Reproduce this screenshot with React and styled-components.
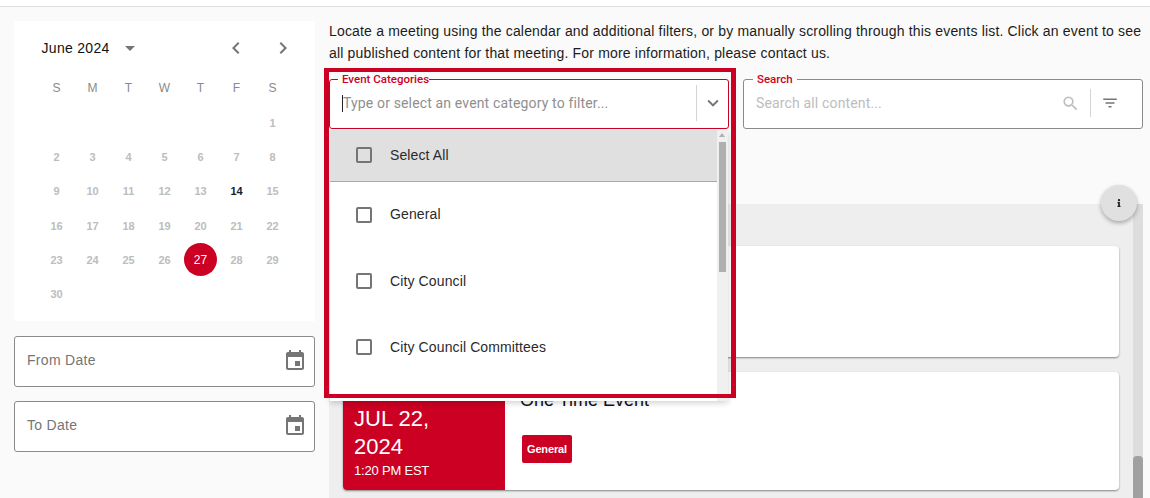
import React from "react";
import styled, { createGlobalStyle } from "styled-components";
import {
  MdArrowDropDown,
  MdChevronLeft,
  MdChevronRight,
  MdEvent,
  MdExpandMore,
  MdFilterList,
  MdSearch,
} from "react-icons/md";
import { FaInfo } from "react-icons/fa";

const RED = "#cc0022";

const GlobalStyle = createGlobalStyle`
  html, body {
    margin: 0;
    height: 100%;
    overflow: hidden;
    background: #fafafa;
    font-family: "Liberation Sans", Arial, sans-serif;
  }
  * { box-sizing: border-box; }
`;

const Page = styled.div`
  width: 1150px;
  height: 498px;
  overflow: hidden;
`;

const TopBar = styled.div`
  height: 7px;
  background: #fff;
  border-bottom: 1px solid #e0e0e0;
`;

const Body = styled.div`
  display: flex;
  gap: 14px;
  padding: 13px 7px 0 14px;
`;

const Sidebar = styled.aside`
  width: 301px;
  flex: none;
  display: flex;
  flex-direction: column;
  padding-top: 1px;
`;

const Calendar = styled.div`
  height: 300px;
  background: #fff;
  padding: 15px 0 0 24.5px;
  margin-bottom: 15px;
`;

const CalendarHead = styled.div`
  display: flex;
  align-items: center;
  height: 24px;
  padding-left: 3px;
  margin-bottom: 11px;
`;

const MonthLabel = styled.span`
  font-size: 14px;
  letter-spacing: 0.3px;
  color: #111;
`;

const MonthCaret = styled(MdArrowDropDown)`
  font-size: 24px;
  color: #757575;
  margin-left: 8px;
`;

const NavGroup = styled.div`
  margin-left: 82px;
  display: flex;
  gap: 23px;
  color: #757575;
  font-size: 24px;
`;

const WeekRow = styled.div`
  display: grid;
  grid-template-columns: repeat(7, 36px);
  height: 34px;
  align-items: center;
  margin-bottom: 1px;
`;

const WeekDay = styled.span`
  text-align: center;
  font-size: 12px;
  color: #8a8a8a;
`;

const DayGrid = styled.div`
  display: grid;
  grid-template-columns: repeat(7, 36px);
  grid-auto-rows: 34.2px;
  align-items: center;
  justify-items: center;
`;

const Day = styled.span`
  grid-column-start: ${(p) => p.$start || "auto"};
  width: 33px;
  height: 33px;
  border-radius: 50%;
  display: flex;
  align-items: center;
  justify-content: center;
  font-size: ${(p) => (p.$selected ? 12 : 11)}px;
  font-weight: ${(p) => (p.$selected ? 400 : 700)};
  color: ${(p) => (p.$selected ? "#fff" : p.$today ? "#1a1a2e" : "#bdbdbd")};
  background: ${(p) => (p.$selected ? RED : "transparent")};
`;

const DateField = styled.div`
  height: 51px;
  background: #fff;
  border: 1px solid #8a8a8a;
  border-radius: 3px;
  display: flex;
  align-items: flex-start;
  justify-content: space-between;
  padding: 12px 7px 0 12px;
  margin-bottom: 14px;
  font-size: 14px;
  letter-spacing: 0.3px;
  color: #757575;
  line-height: 22px;
`;

const DateIcon = styled(MdEvent)`
  font-size: 24px;
  color: #757575;
`;

const Main = styled.main`
  flex: 1;
  min-width: 0;
`;

const Intro = styled.p`
  margin: 0 0 9px;
  width: 814px;
  font-size: 14px;
  line-height: 22px;
  letter-spacing: 0.175px;
  color: #1c1c1c;
`;

const FilterRow = styled.div`
  position: relative;
  display: flex;
  gap: 14px;
  height: 131px;
`;

const Field = styled.fieldset`
  position: relative;
  margin: 0;
  padding: 0 0 0 12px;
  height: 56px;
  width: ${(p) => p.$width}px;
  flex: none;
  background: #fff;
  border: 1px solid ${(p) => (p.$active ? RED : "#8a8a8a")};
  border-radius: 3px;
  display: flex;
  align-items: flex-start;
`;

const Legend = styled.legend`
  padding: 0 ${(p) => p.$trail}px 0 4px;
  margin-left: ${(p) => p.$offset}px;
  font-family: Roboto, sans-serif;
  font-size: 11.5px;
  line-height: 12px;
  font-weight: 500;
  color: ${RED};
`;

const Inner = styled.div`
  display: flex;
  align-items: center;
  width: 100%;
  height: 36px;
  font-family: Roboto, sans-serif;
  font-size: 14px;
`;

const Caret = styled.span`
  width: 1px;
  height: 17px;
  background: #222;
`;

const Placeholder = styled.span`
  flex: 1;
  letter-spacing: 0.15px;
  color: ${(p) => p.$color};
`;

const Divider = styled.span`
  width: 1px;
  height: ${(p) => p.$height}px;
  background: #d4d4d4;
  margin: 0 ${(p) => p.$gap}px;
`;

const ChevronIcon = styled(MdExpandMore)`
  font-size: 22px;
  color: #757575;
  margin: 0 4px 0 1px;
`;

const SearchIcon = styled(MdSearch)`
  font-size: 19px;
  color: #bdbdbd;
`;

const FilterIcon = styled(MdFilterList)`
  font-size: 18px;
  color: #757575;
  margin-right: 23px;
`;

const Dropdown = styled.div`
  position: absolute;
  z-index: 10;
  top: 45px;
  left: 0;
  width: 398px;
  height: 271px;
  background: #fff;
  display: flex;
  box-shadow: 0 2px 6px rgba(0, 0, 0, 0.18);
`;

const OptionList = styled.div`
  flex: 1;
  display: flex;
  flex-direction: column;
`;

const Option = styled.div`
  height: ${(p) => p.$height}px;
  flex: none;
  display: flex;
  align-items: center;
  padding: 0 0 2px 26px;
  font-size: 14px;
  letter-spacing: 0.12px;
  color: #2a2a2a;
  background: ${(p) => (p.$head ? "#e0e0e0" : "#fff")};
  border-bottom: ${(p) => (p.$head ? "1px solid #aaa" : "none")};
`;

const Check = styled.span`
  width: 16px;
  height: 16px;
  border: 2px solid #757575;
  border-radius: 2px;
  margin-right: 18px;
  margin-top: ${(p) => p.$shift || 0}px;
`;

const ScrollTrack = styled.div`
  width: 11px;
  flex: none;
  background: #f0f0f0;
  padding: 12px 2px 0;
  position: relative;
`;

const ScrollArrow = styled.span`
  position: absolute;
  top: 3px;
  left: 2px;
  border-left: 3.5px solid transparent;
  border-right: 3.5px solid transparent;
  border-bottom: 4px solid #b0b0b0;
`;

const ScrollThumb = styled.div`
  height: 130px;
  background: #b0b0b0;
`;

const Highlight = styled.div`
  position: absolute;
  z-index: 20;
  top: -5px;
  left: -5px;
  width: 412px;
  height: 330px;
  border: solid ${RED};
  border-width: 4px 5px;
  pointer-events: none;
`;

const Panel = styled.section`
  position: relative;
  width: 814px;
  height: 300px;
  background: #eee;
  display: flex;
`;

const PanelBody = styled.div`
  flex: 1;
  padding: 42px 14px 0;
  display: flex;
  flex-direction: column;
  gap: 15px;
`;

const PanelScroll = styled.div`
  width: 10px;
  flex: none;
  background: #ddd;
  padding-top: 252px;
`;

const PanelThumb = styled.div`
  height: 48px;
  background: #a0a0a0;
  border-radius: 4px 4px 0 0;
`;

const InfoButton = styled.button`
  position: absolute;
  top: -19px;
  right: 6px;
  width: 36px;
  height: 36px;
  border: none;
  padding: 0;
  border-radius: 50%;
  background: #e0e0e0;
  box-shadow: 0 2px 4px rgba(0, 0, 0, 0.3);
  display: flex;
  align-items: center;
  justify-content: center;
  color: #222;
  font-size: 8px;
  z-index: 5;
`;

const Card = styled.article`
  height: ${(p) => p.$height}px;
  flex: none;
  background: #fff;
  border-radius: 4px;
  box-shadow: 0 1px 2px rgba(0, 0, 0, 0.45);
  display: flex;
  overflow: hidden;
`;

const DateBlock = styled.div`
  width: 162px;
  flex: none;
  background: ${RED};
  color: #fff;
  padding: 33px 0 0 11px;
`;

const DateText = styled.div`
  font-size: 22px;
  line-height: 28px;
  width: 90px;
`;

const TimeText = styled.div`
  font-size: 13px;
  line-height: 20px;
  letter-spacing: -0.2px;
`;

const CardBody = styled.div`
  padding: 17px 0 0 15px;
`;

const CardTitle = styled.div`
  font-size: 18px;
  line-height: 22px;
  color: #111;
  margin-bottom: 24px;
`;

const Tag = styled.span`
  display: inline-flex;
  align-items: center;
  height: 28px;
  margin-left: 2px;
  padding: 0 5px;
  border-radius: 2px;
  background: ${RED};
  color: #fff;
  font-size: 11px;
  font-weight: 700;
  letter-spacing: -0.15px;
`;

const WEEK = ["S", "M", "T", "W", "T", "F", "S"];
const DAYS = Array.from({ length: 30 }, (_, i) => i + 1);

export default function App() {
  return (
    <Page>
      <GlobalStyle />
      <TopBar />
      <Body>
        <Sidebar>
          <Calendar>
            <CalendarHead>
              <MonthLabel>June 2024</MonthLabel>
              <MonthCaret />
              <NavGroup>
                <MdChevronLeft />
                <MdChevronRight />
              </NavGroup>
            </CalendarHead>
            <WeekRow>
              {WEEK.map((d, i) => (
                <WeekDay key={i}>{d}</WeekDay>
              ))}
            </WeekRow>
            <DayGrid>
              {DAYS.map((d) => (
                <Day key={d} $start={d === 1 ? 7 : 0} $today={d === 14} $selected={d === 27}>
                  {d}
                </Day>
              ))}
            </DayGrid>
          </Calendar>
          <DateField>
            From Date
            <DateIcon />
          </DateField>
          <DateField>
            To Date
            <DateIcon />
          </DateField>
        </Sidebar>
        <Main>
          <Intro>
            Locate a meeting using the calendar and additional filters, or by manually scrolling through this events
            list. Click an event to see all published content for that meeting. For more information, please contact us.
          </Intro>
          <FilterRow>
            <Field $width={400} $active>
              <Legend $offset={-4} $trail={0}>
                Event Categories
              </Legend>
              <Inner>
                <Caret />
                <Placeholder $color="#8f8f8f">Type or select an event category to filter...</Placeholder>
                <Divider $height={36} $gap={4} />
                <ChevronIcon />
              </Inner>
              <Dropdown>
                <OptionList>
                  <Option $head $height={52}>
                    <Check />
                    Select All
                  </Option>
                  <Option $height={66}>
                    <Check $shift={1} />
                    General
                  </Option>
                  <Option $height={67}>
                    <Check $shift={1} />
                    City Council
                  </Option>
                  <Option $height={66}>
                    <Check />
                    City Council Committees
                  </Option>
                </OptionList>
                <ScrollTrack>
                  <ScrollArrow />
                  <ScrollThumb />
                </ScrollTrack>
              </Dropdown>
            </Field>
            <Field $width={400}>
              <Legend $offset={-3} $trail={4}>
                Search
              </Legend>
              <Inner>
                <Placeholder $color="#bdbdbd">Search all content...</Placeholder>
                <SearchIcon />
                <Divider $height={28} $gap={10} />
                <FilterIcon />
              </Inner>
            </Field>
            <Highlight />
          </FilterRow>
          <Panel>
            <InfoButton aria-label="Info">
              <FaInfo />
            </InfoButton>
            <PanelBody>
              <Card $height={111} />
              <Card $height={118}>
                <DateBlock>
                  <DateText>JUL 22, 2024</DateText>
                  <TimeText>1:20 PM EST</TimeText>
                </DateBlock>
                <CardBody>
                  <CardTitle>One Time Event</CardTitle>
                  <Tag>General</Tag>
                </CardBody>
              </Card>
            </PanelBody>
            <PanelScroll>
              <PanelThumb />
            </PanelScroll>
          </Panel>
        </Main>
      </Body>
    </Page>
  );
}
